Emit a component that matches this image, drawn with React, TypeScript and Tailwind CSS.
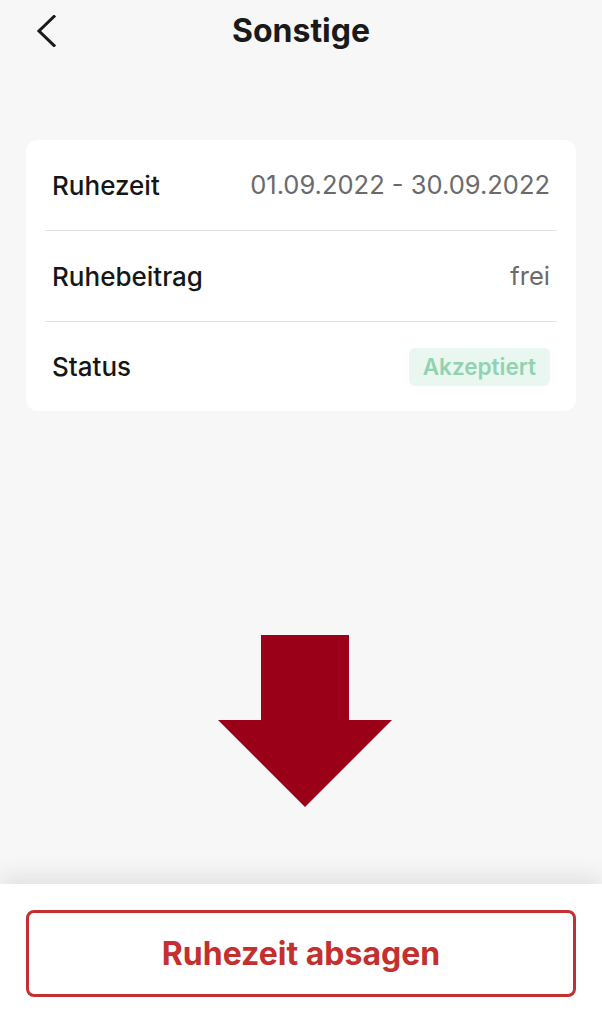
const rows = [
  { label: 'Ruhezeit', value: '01.09.2022 - 30.09.2022' },
  { label: 'Ruhebeitrag', value: 'frei' },
];

export default function App() {
  return (
    <div
      className="h-[1024px] w-full bg-[#f7f7f8] flex flex-col overflow-hidden"
      style={{ fontFamily: 'Inter, "Noto Sans", sans-serif' }}
    >
      {/* header */}
      <header className="h-[62px] flex items-center pl-[36px] pr-[30px]">
        <svg width="20" height="32" viewBox="0 0 20 32" className="shrink-0">
          <path d="M18 1.5 L3 16 L18 30.5" fill="none" stroke="#1a1a1a" strokeWidth="3" strokeLinecap="square" />
        </svg>
        <h1 className="flex-1 text-center text-[32px] font-bold text-[#1a1a1a] mr-[26px]">
          Sonstige
        </h1>
      </header>

      {/* details card */}
      <main className="flex-1 flex flex-col items-center px-[26px]">
        <div className="mt-[78px] w-full bg-white rounded-[12px]">
          {rows.map((r) => (
            <div key={r.label} className="mx-[19px] h-[91px] flex items-center justify-between px-[7px] border-b border-[#e3e3e5]">
              <span className="text-[26px] font-medium text-[#161616]">{r.label}</span>
              <span className="text-[25.5px] text-[#6a6a6d]">{r.value}</span>
            </div>
          ))}
          <div className="mx-[19px] h-[89px] flex items-center justify-between px-[7px]">
            <span className="text-[26px] font-medium text-[#161616]">Status</span>
            <span className="h-[38px] px-[14px] flex items-center rounded-[6px] bg-[#e9f7f0] text-[22.5px] font-semibold text-[#8fd3b1]">
              Akzeptiert
            </span>
          </div>
        </div>

        <svg className="mt-[224px] ml-[8px]" width="174" height="173" viewBox="0 0 174 173">
          <path d="M43 0 H131 V85 H174 L87 172 L0 85 H43 Z" fill="#9b0019" />
        </svg>
      </main>

      {/* bottom action */}
      <footer className="h-[140px] bg-white shadow-[0_-8px_22px_rgba(0,0,0,0.09)] px-[26px] pt-[26px]">
        <button className="w-full h-[87px] rounded-[8px] border-[3px] border-[#c4302f] text-[#c4302f] text-[32px] font-bold">
          Ruhezeit absagen
        </button>
      </footer>
    </div>
  );
}
